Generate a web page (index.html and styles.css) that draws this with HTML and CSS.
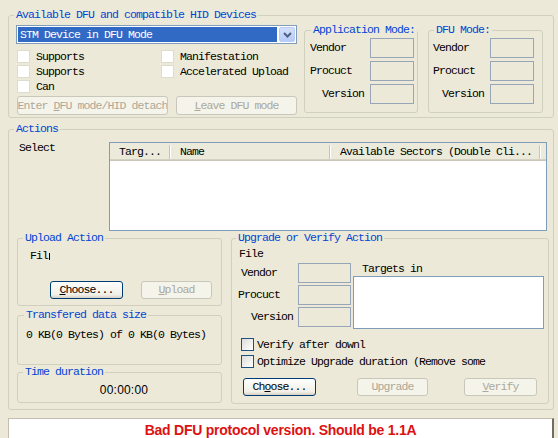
FILE: index.html
```html
<!DOCTYPE html>
<html lang="en">
<head>
    <meta charset="UTF-8">
    <title>DfuSe Demo</title>
    <link rel="stylesheet" href="styles.css">
</head>
<body>
    <div class="dialog">
        <fieldset class="group devices">
            <legend>Available DFU and compatible HID Devices</legend>
            <div class="devices-body">
                <div class="devices-left">
                    <div class="combo">
                        <span class="combo-value">STM Device in DFU Mode</span>
                        <span class="combo-btn">
                            <svg width="9" height="6" viewBox="0 0 9 6"><path d="M1 1 L4.5 4.5 L8 1" fill="none" stroke="#4d6185" stroke-width="2"/></svg>
                        </span>
                    </div>
                    <div class="caps">
                        <label class="check off"><span class="box"></span>Supports</label>
                        <label class="check off"><span class="box"></span>Manifestation</label>
                        <label class="check off"><span class="box"></span>Supports</label>
                        <label class="check off"><span class="box"></span>Accelerated Upload</label>
                        <label class="check off"><span class="box"></span>Can</label>
                    </div>
                    <div class="mode-buttons">
                        <button class="btn btn-enter" disabled><span>Enter <u>D</u>FU mode/HID detach</span></button>
                        <button class="btn btn-leave" disabled><span><u>L</u>eave DFU mode</span></button>
                    </div>
                </div>
                <fieldset class="group ids app-mode">
                    <legend>Application Mode:</legend>
                    <div class="id-grid">
                        <span>Vendor</span><span class="edit"></span>
                        <span>Procuct</span><span class="edit"></span>
                        <span class="indent">Version</span><span class="edit"></span>
                    </div>
                </fieldset>
                <fieldset class="group ids dfu-mode">
                    <legend>DFU Mode:</legend>
                    <div class="id-grid">
                        <span>Vendor</span><span class="edit"></span>
                        <span>Procuct</span><span class="edit"></span>
                        <span class="indent">Version</span><span class="edit"></span>
                    </div>
                </fieldset>
            </div>
        </fieldset>

        <fieldset class="group actions">
            <legend>Actions</legend>
            <div class="select-row">
                <span class="select-label">Select</span>
                <div class="list">
                    <div class="list-head">
                        <span class="col col-target">Targ...</span><span class="sep"></span>
                        <span class="col col-name">Name</span><span class="sep"></span>
                        <span class="col col-sectors">Available Sectors (Double Cli...</span><span class="sep"></span>
                    </div>
                </div>
            </div>
            <div class="actions-bottom">
                <div class="actions-left">
                    <fieldset class="group upload">
                        <legend>Upload Action</legend>
                        <div class="file-label"><span class="clip">Fil</span></div>
                        <div class="btn-row">
                            <button class="btn btn-choose"><span><u>C</u>hoose...</span></button>
                            <button class="btn btn-upload" disabled><span><u>U</u>pload</span></button>
                        </div>
                    </fieldset>
                    <fieldset class="group transfer">
                        <legend>Transfered data size</legend>
                        <div class="transfer-text">0 KB(0 Bytes) of 0 KB(0 Bytes)</div>
                    </fieldset>
                    <fieldset class="group duration">
                        <legend>Time duration</legend>
                        <div class="duration-text">00:00:00</div>
                    </fieldset>
                </div>
                <fieldset class="group upgrade">
                    <legend>Upgrade or Verify Action</legend>
                    <div class="file-label">File</div>
                    <div class="upgrade-info">
                        <div class="upgrade-ids">
                            <span class="lbl-vendor">Vendor</span><span class="edit"></span>
                            <span class="lbl-product">Procuct</span><span class="edit"></span>
                            <span class="lbl-version">Version</span><span class="edit"></span>
                        </div>
                        <div class="targets">
                            <div class="targets-label">Targets in</div>
                            <div class="targets-box"></div>
                        </div>
                    </div>
                    <div class="upgrade-checks">
                        <label class="check on"><span class="box"></span>Verify after downl</label>
                        <label class="check on"><span class="box"></span>Optimize Upgrade duration (Remove some</label>
                    </div>
                    <div class="btn-row upgrade-buttons">
                        <button class="btn btn-choose"><span>Ch<u>o</u>ose...</span></button>
                        <button class="btn btn-upgrade" disabled><span>Upgrade</span></button>
                        <button class="btn btn-verify" disabled><span><u>V</u>erify</span></button>
                    </div>
                </fieldset>
            </div>
        </fieldset>

        <div class="status">Bad DFU protocol version. Should be 1.1A</div>
    </div>
</body>
</html>
```

FILE: styles.css
```css
* {
    box-sizing: border-box;
}
body {
    margin: 0;
    width: 558px;
    height: 438px;
    background: #ece9d8;
    font-family: "Liberation Mono", "DejaVu Sans Mono", monospace;
    font-size: 11.5px;
    letter-spacing: -0.9px;
    line-height: 12px;
    color: #000;
    overflow: hidden;
}
.dialog {
    padding: 9px 0 0 8px;
    width: 554px;
}

/* group boxes */
.group {
    margin: 0;
    padding: 0;
    min-width: 0;
    border: 1px solid #d0d0bf;
    border-radius: 3px;
}
.group legend {
    padding: 0 2px;
    margin-left: -2px;
    height: 12px;
    line-height: 12px;
    white-space: nowrap;
    color: #0046d5;
}

/* top: devices */
.devices {
    width: 546px;
    padding: 4px 0 2px 7px;
}
.devices-body {
    display: flex;
    align-items: flex-start;
}
.devices-left {
    width: 281px;
}
.combo {
    height: 19px;
    display: flex;
    padding: 1px;
    border: 1px solid #7f9db9;
    background: #fff;
}
.combo-value {
    flex: 1;
    margin-right: 2px;
    padding-left: 2px;
    background: #316ac5;
    color: #fff;
    line-height: 15px;
}
.combo-btn {
    width: 16px;
    display: flex;
    align-items: center;
    justify-content: center;
    border: 1px solid #bccdf5;
    border-radius: 2px;
    background: linear-gradient(#d4e0fc, #b7cbf7);
}
.caps {
    margin-top: 5px;
    display: grid;
    grid-template-columns: 145px 1fr;
    grid-auto-rows: 15px;
}
.check {
    display: flex;
    align-items: center;
    gap: 6px;
    white-space: nowrap;
}
.caps .check:nth-child(odd) {
    margin-left: 1px;
}
.box {
    width: 13px;
    height: 13px;
    flex: none;
}
.check.off .box {
    border: 1px solid #dedbcf;
    background: #fff;
}
.check.on {
    gap: 3px;
    height: 13px;
}
.check.on .box {
    border: 1px solid #1c5180;
    background: linear-gradient(135deg, #dcdcd7, #fff);
}
.mode-buttons {
    margin-top: 2px;
    display: flex;
}
.btn {
    height: 19px;
    padding: 0;
    display: flex;
    align-items: center;
    justify-content: center;
    overflow: hidden;
    white-space: nowrap;
    font: inherit;
    letter-spacing: inherit;
    color: #000;
    border: 1px solid #003c74;
    border-radius: 3px;
    background: linear-gradient(#fefefd, #f1efe6 80%, #d6d0c5);
}
.btn span {
    flex: none;
}
.btn:disabled {
    color: #aca899;
    border-color: #c9c7ba;
    background: #f5f4ea;
}
.btn-enter {
    margin-left: 1px;
    width: 151px;
}
.btn-leave {
    margin-left: 8px;
    width: 121px;
}

.ids {
    margin-top: -1px;
    padding: 2px 3px 8px 5px;
}
.app-mode {
    margin-left: 7px;
    width: 114px;
}
.app-mode legend {
    margin-left: 1px;
}
.dfu-mode {
    margin-left: 10px;
    width: 115px;
    padding-left: 4px;
    padding-right: 8px;
}
.dfu-mode legend {
    margin-left: 1px;
}
.id-grid {
    display: grid;
    grid-template-columns: 1fr 44px;
    grid-auto-rows: 20px;
    row-gap: 3px;
    align-items: center;
}
.app-mode .indent {
    padding-left: 12px;
}
.dfu-mode .indent {
    padding-left: 9px;
}
.edit {
    height: 100%;
    border: 1px solid #97a5b8;
    background: #ece9d8;
}

/* actions */
.actions {
    margin-top: 5px;
    width: 546px;
    padding: 7px 4px 5px 7px;
}
.select-row {
    display: flex;
}
.select-label {
    width: 93px;
    padding-left: 3px;
}
.list {
    width: 438px;
    height: 89px;
    border: 1px solid #7f9db9;
    background: #fff;
}
.list-head {
    height: 18px;
    display: flex;
    align-items: center;
    background: #ebeadb;
    box-shadow: inset 0 -1px #cbc7b8, inset 0 -2px #d6d2c2;
}
.col {
    padding-left: 9px;
    white-space: nowrap;
    overflow: hidden;
}
.col-target {
    width: 59px;
}
.col-name {
    width: 158px;
}
.col-sectors {
    width: 208px;
}
.sep {
    width: 2px;
    height: 14px;
    border-left: 1px solid #c7c5b2;
    border-right: 1px solid #fff;
}
.actions-bottom {
    margin-top: 1px;
    display: flex;
    gap: 9px;
}
.actions-left {
    margin-left: 1px;
    width: 205px;
}
.upload {
    padding: 6px 7px 6px 7px;
}
.file-label {
    padding-left: 5px;
    height: 12px;
}
.clip {
    display: inline-block;
    width: 20px;
    overflow: hidden;
    white-space: nowrap;
    vertical-align: top;
}
.clip::after {
    content: "";
    display: inline-block;
    width: 2px;
    height: 7px;
    margin-left: 1px;
    vertical-align: -1px;
    border-left: 1px solid #000;
}
.btn-row {
    display: flex;
}
.upload .btn-row {
    margin-top: 19px;
}
.btn-row .btn {
    height: 18px;
}
.upload .btn-choose {
    margin-left: 25px;
    width: 73px;
}
.btn-upload {
    margin-left: 18px;
    width: 71px;
}
.transfer {
    margin-top: 3px;
    padding: 8px 7px 23px 8px;
}
.duration {
    margin-top: 1px;
    padding: 6px 7px 6px 7px;
}
.duration-text {
    padding-left: 9px;
    text-align: center;
    font-family: "Liberation Sans", Arial, sans-serif;
    font-size: 12px;
    letter-spacing: 0.2px;
}

.upgrade {
    width: 318px;
    padding: 4px 4px 7px 7px;
}
.upgrade legend {
    margin-left: -3px;
}
.upgrade .file-label {
    padding-left: 0;
}
.upgrade-info {
    margin-top: 3px;
    display: flex;
}
.upgrade-ids {
    display: grid;
    grid-template-columns: 59px 53px;
    grid-auto-rows: 20px;
    row-gap: 2px;
    align-items: center;
}
.lbl-vendor {
    padding-left: 2px;
}
.lbl-product {
    margin-left: -1px;
}
.lbl-version {
    padding-left: 12px;
}
.targets {
    margin-left: 2px;
}
.targets-label {
    padding-left: 9px;
    height: 12px;
    margin-bottom: 1px;
}
.targets-box {
    width: 191px;
    height: 53px;
    border: 1px solid #7f9db9;
    background: #fff;
}
.upgrade-checks {
    margin-top: 9px;
    margin-left: 2px;
    display: flex;
    flex-direction: column;
    gap: 4px;
}
.upgrade-buttons {
    margin-top: 10px;
}
.upgrade .btn-choose {
    margin-left: 4px;
    width: 73px;
}
.btn-upgrade {
    margin-left: 41px;
    width: 71px;
}
.btn-verify {
    margin-left: 36px;
    width: 73px;
}

/* status line */
.status {
    margin-top: 8px;
    width: 546px;
    height: 21px;
    padding-top: 3px;
    background: #fff;
    border-top: 1px solid #c2bfb0;
    border-left: 1px solid #c2bfb0;
    border-right: 2px solid #6f6d63;
    text-align: center;
    font-family: "Liberation Sans", Arial, sans-serif;
    font-weight: bold;
    font-size: 14px;
    letter-spacing: -0.25px;
    line-height: 16px;
    color: #dd1111;
}
```
